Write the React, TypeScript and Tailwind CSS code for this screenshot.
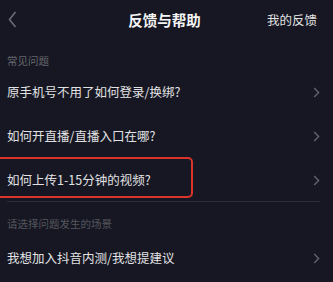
import React from "react";

const faq = ["原手机号不用了如何登录/换绑?", "如何开直播/直播入口在哪?", "如何上传1-15分钟的视频?"];

function Chevron() {
	return (
		<svg width="7" height="11" viewBox="0 0 7 11" fill="none">
			<path d="M1.2 1L5.6 5.5L1.2 10" stroke="#5f606a" strokeWidth="1.5" />
		</svg>
	);
}

function Row({ text }: { text: string }) {
	return (
		<div className="h-[44px] flex items-center justify-between pl-[7px] pr-[13px]">
			<span className="text-[12.5px] leading-[18px] text-[#e2e2e4]">{text}</span>
			<Chevron />
		</div>
	);
}

export default function App() {
	return (
		<div
			className="relative w-[333px] h-[282px] overflow-hidden bg-[#161722]"
			style={{ fontFamily: '"Noto Sans CJK SC", "Noto Sans", sans-serif' }}
		>
			<div className="h-[39px] grid grid-cols-[1fr_auto_1fr] items-center">
				<div className="pl-[8px] flex items-center">
					<svg width="9" height="17" viewBox="0 0 9 17" fill="none">
						<path d="M7.5 1L1.5 8.5L7.5 16" stroke="#6a6b74" strokeWidth="1.6" />
					</svg>
				</div>
				<div className="text-[14.5px] leading-[20px] font-bold text-[#f4f4f5] -ml-[4px]">反馈与帮助</div>
				<div className="flex justify-end pr-[16px] text-[12.5px] leading-[18px] text-[#e2e2e4]">我的反馈</div>
			</div>

			<div className="h-[31px] pt-[15px] pl-[7px] text-[10.5px] leading-[14px] text-[#66676e]">常见问题</div>
			{faq.map((q) => (
				<Row key={q} text={q} />
			))}
			<div className="ml-[7px] mr-[13px] -mt-px h-px bg-[#2b2c36]" />

			<div className="h-[34px] pt-[15px] pl-[7px] text-[10.5px] leading-[14px] text-[#55565e]">请选择问题发生的场景</div>
			<Row text="我想加入抖音内测/我想提建议" />

			<div className="absolute left-[-4px] top-[157px] w-[197px] h-[41px] border-2 border-[#d9352b] rounded-[5px]" />
		</div>
	);
}
